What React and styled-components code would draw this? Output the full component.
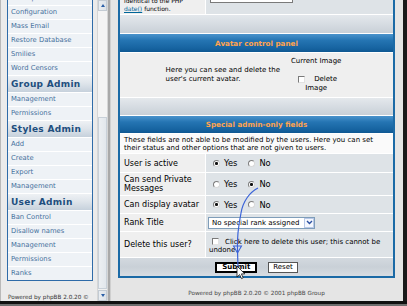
import React from "react";
import styled, { createGlobalStyle } from "styled-components";

const GlobalStyle = createGlobalStyle`
  html, body {
    margin: 0;
    padding: 0;
  }
  body {
    font-family: "DejaVu Sans", Verdana, sans-serif;
    background: #e5e5e5;
  }
`;

const navGroups = [
  {
    items: [
      "Backup Database",
      "Configuration",
      "Mass Email",
      "Restore Database",
      "Smilies",
      "Word Censors"
    ]
  },
  { title: "Group Admin", items: ["Management", "Permissions"] },
  { title: "Styles Admin", items: ["Add", "Create", "Export", "Management"] },
  {
    title: "User Admin",
    items: ["Ban Control", "Disallow names", "Management", "Permissions", "Ranks"]
  }
];

const radioRows = [
  { label: "User is active", value: "yes", height: 18 },
  { label: "Can send Private Messages", value: "no", height: 22 },
  { label: "Can display avatar", value: "yes", height: 17 }
];

export default function App() {
  return (
    <>
      <GlobalStyle />
      <Screen>
        <Frames>
          <NavFrame>
            <NavColumn>
              <NavBox>
                {navGroups.map((group, i) => (
                  <React.Fragment key={i}>
                    {group.title && <NavHeader>{group.title}</NavHeader>}
                    {group.items.map((item, j) => (
                      <NavItem key={j}>{item}</NavItem>
                    ))}
                  </React.Fragment>
                ))}
              </NavBox>
              <NavPowered>Powered by phpBB 2.0.20 ©</NavPowered>
            </NavColumn>
            <Scrollbar>
              <ScrollButton>
                <Arrow $up />
              </ScrollButton>
              <ScrollTrack />
              <ScrollThumb />
              <ScrollButton>
                <Arrow />
              </ScrollButton>
            </Scrollbar>
          </NavFrame>
          <FrameDivider />
          <MainFrame>
            <FormTable>
              <Pair $h={14}>
                <LabelCell $small>
                  <span>
                    identical to the PHP
                    <br />
                    <Link>date()</Link> function.
                  </span>
                </LabelCell>
                <ValueCell>
                  <CutInput />
                </ValueCell>
              </Pair>
              <SpaceRow $h={18} />
              <HeadRow $h={18}>Avatar control panel</HeadRow>
              <AvatarRow>
                <AvatarText>
                  Here you can see and delete the
                  <br />
                  user's current avatar.
                </AvatarText>
                <AvatarSide>
                  <div>Current Image</div>
                  <ImageGap />
                  <CheckLine>
                    <Check />
                    Delete
                  </CheckLine>
                  <div>Image</div>
                </AvatarSide>
              </AvatarRow>
              <SpaceRow $h={17} />
              <HeadRow $h={17}>Special admin-only fields</HeadRow>
              <NoteRow>
                These fields are not able to be modified by the users. Here you can set
                <br />
                their status and other options that are not given to users.
              </NoteRow>
              {radioRows.map((row) => (
                <Pair key={row.label} $h={row.height}>
                  <LabelCell>{row.label}</LabelCell>
                  <ValueCell $pad={7}>
                    <Choice>
                      <Radio $on={row.value === "yes"} />
                      Yes
                    </Choice>
                    <Choice>
                      <Radio $on={row.value === "no"} />
                      No
                    </Choice>
                  </ValueCell>
                </Pair>
              ))}
              <Pair $h={17}>
                <LabelCell>Rank Title</LabelCell>
                <ValueCell $pad={2}>
                  <Select>
                    <SelectText>No special rank assigned</SelectText>
                    <SelectButton>
                      <svg width="7" height="5" viewBox="0 0 7 5">
                        <path d="M1 1 L3.5 3.5 L6 1" fill="none" stroke="#2a4fa0" strokeWidth="1.4" />
                      </svg>
                    </SelectButton>
                  </Select>
                </ValueCell>
              </Pair>
              <Pair $h={25}>
                <LabelCell>Delete this user?</LabelCell>
                <ValueCell $pad={3}>
                  <DeleteText>
                    <Check $inline />
                    Click here to delete this user; this cannot be
                    <br />
                    undone
                  </DeleteText>
                </ValueCell>
              </Pair>
              <ButtonRow>
                <Button $primary>Submit</Button>
                <Button>Reset</Button>
              </ButtonRow>
            </FormTable>
            <Powered>Powered by phpBB 2.0.20 © 2001 phpBB Group</Powered>
          </MainFrame>
          <WindowEdge />
        </Frames>
        <BottomEdge />
        <Overlay width="407" height="306" viewBox="0 0 407 306">
          <path
            d="M258 188 C 250 192, 243 201, 241 213 C 238 228, 237 240, 237.5 250 L 238 268"
            fill="none"
            stroke="#3a63d8"
            strokeWidth="1.2"
          />
          <path d="M233.5 246 L241.5 246 L237.5 253 Z" fill="none" stroke="#3a63d8" strokeWidth="1.1" />
          <path
            d="M237 266 L237 277 L239.6 274.6 L241.5 278.6 L243.2 277.8 L241.4 273.9 L244.8 273.9 Z"
            fill="#fff"
            stroke="#111"
            strokeWidth="0.8"
          />
        </Overlay>
      </Screen>
    </>
  );
}

const Screen = styled.div`
  position: relative;
  width: 407px;
  height: 306px;
  overflow: hidden;
  display: flex;
  flex-direction: column;
  background: #e5e5e5;
`;

const Frames = styled.div`
  display: flex;
  height: 301px;
`;

const BottomEdge = styled.div`
  height: 5px;
  background: linear-gradient(#111 0 3px, #6e6e6e 3px);
`;

const NavFrame = styled.div`
  width: 108px;
  display: flex;
  background: #ebebeb;
  border-left: 1px solid #b9b9b9;
  box-sizing: border-box;
`;

const NavColumn = styled.div`
  width: 96px;
  padding-left: 6px;
  box-sizing: border-box;
  display: flex;
  flex-direction: column;
`;

const NavBox = styled.div`
  width: 86px;
  margin-top: -9px;
  box-sizing: border-box;
  border: 1px solid #2f6ba8;
  background: #fff;
  display: flex;
  flex-direction: column;
  gap: 1px;
`;

const NavItem = styled.div`
  height: 13px;
  line-height: 13px;
  padding-left: 3px;
  background: #eef2f6;
  color: #46719d;
  font-size: 6.8px;
  white-space: nowrap;
`;

const NavHeader = styled.div`
  height: 16px;
  line-height: 16px;
  padding-left: 3px;
  background: linear-gradient(#eef1f4, #dfe5eb 45%, #c6d1dc);
  color: #214e7e;
  font-size: 9px;
  font-weight: bold;
  letter-spacing: 0.3px;
  white-space: nowrap;
`;

const NavPowered = styled.div`
  margin-top: 13px;
  padding-left: 1px;
  font-size: 5.7px;
  color: #333;
  white-space: nowrap;
`;

const Scrollbar = styled.div`
  width: 11px;
  margin-left: auto;
  display: flex;
  flex-direction: column;
  background: #f1f1f1;
  border-left: 1px solid #d6d6d6;
  border-right: 1px solid #d6d6d6;
  box-sizing: border-box;
`;

const ScrollButton = styled.div`
  height: 11px;
  display: flex;
  align-items: center;
  justify-content: center;
  background: linear-gradient(90deg, #e9edf1, #dde3e9);
  border: 1px solid #c3cbd3;
  box-sizing: border-box;
`;

const Arrow = styled.span`
  width: 0;
  height: 0;
  border-left: 2.5px solid transparent;
  border-right: 2.5px solid transparent;
  ${({ $up }) =>
    $up ? "border-bottom: 3px solid #2a5ea6;" : "border-top: 3px solid #2a5ea6;"}
`;

const ScrollTrack = styled.div`
  height: 106px;
  background: #f4f4f4;
`;

const ScrollThumb = styled.div`
  flex: 1;
  margin-bottom: 1px;
  background: linear-gradient(90deg, #eceff2, #e2e7ec);
  border: 1px solid #c8d0d8;
  box-sizing: border-box;
`;

const FrameDivider = styled.div`
  width: 3px;
  background: #a9a9a9;
  border-right: 1px solid #cfcfcf;
  box-sizing: border-box;
`;

const MainFrame = styled.div`
  width: 292px;
  padding: 0 8px 0 7px;
  box-sizing: border-box;
  background: #e5e5e5;
  display: flex;
  flex-direction: column;
`;

const WindowEdge = styled.div`
  width: 4px;
  background: #1a1a1a;
`;

const FormTable = styled.div`
  width: 277px;
  box-sizing: border-box;
  border: 2px solid #1b6aa6;
  border-top: 0;
  background: #fff;
  display: flex;
  flex-direction: column;
  gap: 1px;
`;

const Pair = styled.div`
  display: grid;
  grid-template-columns: 85px 1fr;
  gap: 1px;
  height: ${({ $h }) => $h}px;
`;

const LabelCell = styled.div`
  background: #efefef;
  padding: 0 4px;
  display: flex;
  align-items: ${({ $small }) => ($small ? "flex-end" : "center")};
  padding-bottom: ${({ $small }) => ($small ? "1px" : "0")};
  font-size: ${({ $small }) => ($small ? "6px" : "8px")};
  line-height: ${({ $small }) => ($small ? "8px" : "9px")};
  white-space: ${({ $small }) => ($small ? "nowrap" : "normal")};
  color: #000;
  overflow: hidden;
`;

const Link = styled.span`
  color: #006699;
  text-decoration: underline;
`;

const ValueCell = styled.div`
  background: #dee3e7;
  display: flex;
  align-items: center;
  gap: 11px;
  padding-left: ${({ $pad = 0 }) => $pad}px;
  overflow: hidden;
`;

const CutInput = styled.div`
  align-self: flex-start;
  margin: -10px 0 0 4px;
  width: 83px;
  height: 13px;
  box-sizing: border-box;
  border: 1px solid #7a7a7a;
  background: #fff;
`;

const SpaceRow = styled.div`
  height: ${({ $h }) => $h}px;
  background: linear-gradient(#e4e8ec, #d6dce2 50%, #c9d0d7);
`;

const HeadRow = styled.div`
  height: ${({ $h }) => $h}px;
  display: flex;
  align-items: center;
  justify-content: center;
  background: linear-gradient(#4a93cc, #2575b3 35%, #1663a0 80%, #0f5892);
  color: #ffa34f;
  font-size: 7.2px;
  font-weight: bold;
  white-space: nowrap;
`;

const AvatarRow = styled.div`
  height: 44px;
  background: #efefef;
  display: flex;
  align-items: center;
  justify-content: center;
  gap: 11px;
  padding-right: 6px;
  font-size: 7px;
  line-height: 9px;
  color: #000;
  white-space: nowrap;
`;

const AvatarText = styled.div``;

const AvatarSide = styled.div`
  display: flex;
  flex-direction: column;
  align-items: center;
`;

const ImageGap = styled.div`
  height: 9px;
`;

const CheckLine = styled.div`
  display: flex;
  align-items: center;
  padding-left: 3px;
`;

const Check = styled.span`
  display: inline-block;
  width: 7px;
  height: 7px;
  box-sizing: border-box;
  background: #fff;
  border: 1px solid;
  border-color: #7a7a7a #e2e2e2 #e2e2e2 #7a7a7a;
  margin-right: ${({ $inline }) => ($inline ? "6px" : "9px")};
  vertical-align: ${({ $inline }) => ($inline ? "-1px" : "baseline")};
  margin-left: ${({ $inline }) => ($inline ? "3px" : "0")};
`;

const NoteRow = styled.div`
  height: 19px;
  padding: 0 4px;
  display: flex;
  align-items: center;
  background: #fafafa;
  font-size: 7px;
  line-height: 8px;
  color: #000;
  white-space: nowrap;
  overflow: hidden;
`;

const Choice = styled.span`
  display: inline-flex;
  align-items: center;
  gap: 4px;
  font-size: 8.3px;
  color: #000;
`;

const Radio = styled.span`
  width: 7px;
  height: 7px;
  border-radius: 50%;
  box-sizing: border-box;
  border: 1px solid;
  border-color: #7d7d7d #d8d8d8 #d8d8d8 #7d7d7d;
  background: ${({ $on }) =>
    $on ? "radial-gradient(circle, #111 0 1.3px, #fff 1.7px)" : "#fff"};
`;

const Select = styled.div`
  width: 107px;
  height: 12px;
  box-sizing: border-box;
  border: 1px solid #7f9db9;
  background: #fff;
  display: flex;
  align-items: center;
`;

const SelectText = styled.span`
  flex: 1;
  padding-left: 3px;
  font-size: 7px;
  color: #000;
  white-space: nowrap;
  overflow: hidden;
`;

const SelectButton = styled.span`
  width: 10px;
  height: 10px;
  box-sizing: border-box;
  border: 1px solid #b8c8e8;
  background: #f4f7fd;
  display: flex;
  align-items: center;
  justify-content: center;
`;

const DeleteText = styled.div`
  font-size: 7px;
  line-height: 8px;
  padding-top: 2px;
  color: #000;
  white-space: nowrap;
`;

const ButtonRow = styled.div`
  height: 18px;
  display: flex;
  align-items: center;
  justify-content: center;
  gap: 11px;
  background: linear-gradient(#d3d9df, #c9d0d7 50%, #d8dde2);
`;

const Button = styled.span`
  height: 11px;
  box-sizing: border-box;
  display: flex;
  align-items: center;
  justify-content: center;
  padding: 0 ${({ $primary }) => ($primary ? "5px" : "4px")};
  background: #fff;
  border: ${({ $primary }) => ($primary ? "2px solid #000" : "1px solid #555")};
  font-size: 7px;
  font-weight: ${({ $primary }) => ($primary ? "bold" : "normal")};
  color: #000;
`;

const Powered = styled.div`
  margin-top: 11px;
  text-align: center;
  font-size: 5.7px;
  line-height: 8px;
  color: #444;
  white-space: nowrap;
`;

const Overlay = styled.svg`
  position: absolute;
  left: 0;
  top: 0;
  pointer-events: none;
`;
